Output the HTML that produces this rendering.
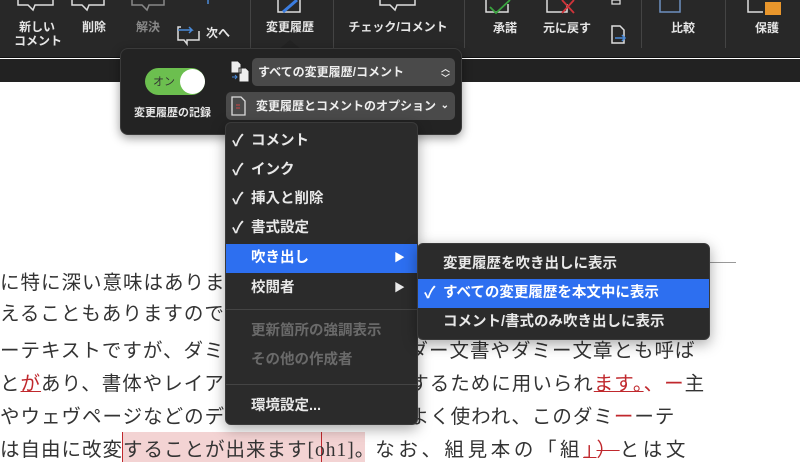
<!DOCTYPE html>
<html><head><meta charset="utf-8"><style>
*{margin:0;padding:0;box-sizing:border-box}
body{width:800px;height:470px;overflow:hidden;background:#fff;position:relative;font-family:"Liberation Sans","Noto Sans CJK JP",sans-serif}
.a{position:absolute;white-space:nowrap}
#tb{position:absolute;left:0;top:0;width:800px;height:58px;background:#282828;border-bottom:1px solid #111}
#strip{position:absolute;left:0;top:59px;width:800px;height:23px;background:#222}
.tl{color:#e6e6e6;font-size:12px;font-weight:bold;text-align:center;line-height:14px}
.sep{position:absolute;top:0;width:1px;height:48px;background:#444}
.doc{position:absolute;left:0;font-size:19.5px;letter-spacing:1px;color:#333;font-family:"Liberation Serif","Noto Sans CJK JP",sans-serif;white-space:nowrap}
.r{color:#c0282d}
.menu{position:absolute;background:#2b2b2b;border-radius:6px;box-shadow:0 4px 14px rgba(0,0,0,.35);border:1px solid #3a3a3a}
.mi{position:absolute;left:0;right:0;height:29px;line-height:29px;color:#e8e8e8;font-size:14.5px;font-weight:bold;padding-left:25px}
.ck{position:absolute;left:6px;font-size:16px}
.dis{color:#6a6a6a}
.hl{background:#2d6ff0;color:#fff}
.ms{position:absolute;left:0;right:0;height:1px;background:#444}
</style></head><body>
<div id="tb"></div><div id="strip"></div>
<svg class="a" style="left:0;top:0" width="800" height="58">
<g fill="none" stroke="#ddd" stroke-width="1.5">
<path d="M18 0 v5 h10 l5 5 l2 -5 h18 v-5"/>
<path d="M72 0 v5 h10 l5 5 l2 -5 h15 v-5"/>
<path d="M132 0 v5 h10 l5 5 l2 -5 h15 v-5" stroke="#888"/>
<path d="M181 27 h-3 v13 h6 l3 4 v-4 h12 v-9"/>
<path d="M278 0 v12 h22 v-12"/>
<path d="M380 0 v5 h10 l5 5 l2 -5 h18 v-5"/>
<path d="M486 0 v12 h22 v-8"/>
<path d="M547 0 v12 h20 v-8"/>
<path d="M208 0 v4" stroke="#4a8ad8"/>
<path d="M612 26 h8 l4 4 v13 h-12z"/>
<path d="M660 0 v12 h20 v-12" stroke="#6d8fc0"/>
<path d="M748 0 v12 h15"/>
</g>
<path d="M178 30 h14 l-3 -3 M192 30 l-3 3" stroke="#4a8ad8" stroke-width="1.5" fill="none"/>
<path d="M283 12 l14 -12" stroke="#3b7de0" stroke-width="3"/>
<path d="M490 7 l6 6 l14 -13" stroke="#39a33e" stroke-width="1.8" fill="none"/>
<path d="M562 0 l12 13 M574 0 l-12 13" stroke="#d0343a" stroke-width="1.8"/>
<path d="M615 38 h10 m-3 -3 l3 3 l-3 3" stroke="#4a8ad8" stroke-width="1.5" fill="none"/>
<path d="M612 0 h8 v4 h-8z" fill="none" stroke="#ddd" stroke-width="1.3"/>
<rect x="765" y="2" width="16" height="13" fill="#e8962c"/>
</svg>
<div class="a tl" style="left:14px;top:20px;width:46px">新しい<br>コメント</div>
<div class="a tl" style="left:78px;top:20px;width:32px">削除</div>
<div class="a tl" style="left:132px;top:20px;width:32px;color:#888">解決</div>
<div class="a tl" style="left:202px;top:26px;width:32px">次へ</div>
<div class="sep" style="left:250px"></div>
<div class="a tl" style="left:262px;top:20px;width:56px">変更履歴</div>
<div class="sep" style="left:333px"></div>
<div class="a tl" style="left:345px;top:20px;width:106px">チェック/コメント</div>
<div class="sep" style="left:464px"></div>
<div class="a tl" style="left:489px;top:21px;width:32px">承諾</div>
<div class="a tl" style="left:540px;top:21px;width:54px">元に戻す</div>
<div class="sep" style="left:641px"></div>
<div class="a tl" style="left:667px;top:21px;width:32px">比較</div>
<div class="sep" style="left:725px"></div>
<div class="a tl" style="left:751px;top:21px;width:32px">保護</div>

<div class="a" style="left:700px;top:262px;width:36px;height:1px;background:#999"></div>
<div class="a" style="left:122px;top:432px;width:243px;height:30px;background:#f3d3d3"></div>
<div class="a" style="left:122px;top:432px;width:1px;height:30px;background:#c0282d"></div>
<div class="a" style="left:321px;top:432px;width:1px;height:30px;background:#c0282d"></div>
<div class="doc" style="top:266px">に特に深い意味はありませんが、ダミーテキストとして使</div>
<div class="doc" style="top:297px">えることもありますので、ご注意くださいませ。ダミー文</div>
<div class="doc" style="top:334px">ーテキストですが、ダミーテキストやダミーダー文書やダミー文章とも呼ば</div>
<div class="doc" style="top:367px">と<span class="r" style="text-decoration:underline">が</span>あり、書体やレイアウトなどを確認などするために用いられ<span class="r" style="text-decoration:underline">ます。</span><span class="r">、ー</span>主</div>
<div class="doc" style="top:400px">やウェヴページなどのデザインなどの分野でよく使われ、このダミ<span class="r">ー</span>ーテ</div>
<div class="doc" style="top:433px">は自由に改変することが出来ます[oh1]。<span style="letter-spacing:3.6px">なお、組見本の「組<span class="r" style="text-decoration:underline">」</span><span class="r" style="text-decoration:line-through">）</span>とは文</span></div>

<svg class="a" style="left:278px;top:40px" width="24" height="10"><path d="M0 10 L12 0 L24 10z" fill="#232323"/></svg>
<div class="a" style="left:120px;top:48px;width:342px;height:87px;background:#232323;border-radius:8px;border:1px solid #3a3a3a;box-shadow:0 3px 10px rgba(0,0,0,.4)"></div>
<div class="a" style="left:145px;top:68px;width:60px;height:27px;border-radius:14px;background:#6cbf4f"></div>
<div class="a" style="left:180px;top:69px;width:25px;height:25px;border-radius:50%;background:#fff"></div>
<div class="a" style="left:153px;top:73px;font-size:11px;color:#333">オン</div>
<div class="a" style="left:134px;top:104px;font-size:11px;font-weight:bold;color:#e6e6e6">変更履歴の記録</div>
<svg class="a" style="left:228px;top:60px" width="24" height="24"><path d="M3 1h7l3 3v9H3z M11 8h7l3 3v11h-10z" fill="#eee" stroke="#222"/><path d="M4 17h5m-2-2l2 2l-2 2" stroke="#4a8ad8" fill="none"/></svg>
<div class="a" style="left:252px;top:58px;width:203px;height:28px;background:#4a4a4a;border-radius:5px;color:#eee;font-size:12px;font-weight:bold;line-height:28px;padding-left:6px">すべての変更履歴/コメント<span style="position:absolute;right:5px;font-size:9px;line-height:9px;top:7px">︿<br>﹀</span></div>
<div class="a" style="left:226px;top:92px;width:229px;height:28px;background:#4a4a4a;border-radius:5px;color:#eee;font-size:12px;font-weight:bold;line-height:28px;padding-left:30px">変更履歴とコメントのオプション<span style="position:absolute;right:6px;font-size:10px">⌄</span></div>
<svg class="a" style="left:231px;top:96px" width="16" height="20"><path d="M1 1h9l4 4v14H1z" fill="none" stroke="#ddd" stroke-width="1.3"/><path d="M5 9h4M5 12h4" stroke="#c44"/></svg>

<div class="menu" style="left:225px;top:122px;width:193px;height:303px">
<div class="mi" style="top:4px"><span class="ck">✓</span>コメント</div>
<div class="mi" style="top:33px"><span class="ck">✓</span>インク</div>
<div class="mi" style="top:62px"><span class="ck">✓</span>挿入と削除</div>
<div class="mi" style="top:91px"><span class="ck">✓</span>書式設定</div>
<div class="mi hl" style="top:121px">吹き出し<span style="position:absolute;right:12px;font-size:11px">▶</span></div>
<div class="mi" style="top:151px">校閲者<span style="position:absolute;right:12px;font-size:11px">▶</span></div>
<div class="ms" style="top:186px"></div>
<div class="mi dis" style="top:194px">更新箇所の強調表示</div>
<div class="mi dis" style="top:223px">その他の作成者</div>
<div class="ms" style="top:261px"></div>
<div class="mi" style="top:269px">環境設定...</div>
</div>
<div class="menu" style="left:417px;top:243px;width:293px;height:97px">
<div class="mi" style="top:6px">変更履歴を吹き出しに表示</div>
<div class="mi hl" style="top:35px"><span class="ck">✓</span>すべての変更履歴を本文中に表示</div>
<div class="mi" style="top:64px">コメント/書式のみ吹き出しに表示</div>
</div>
</body></html>
